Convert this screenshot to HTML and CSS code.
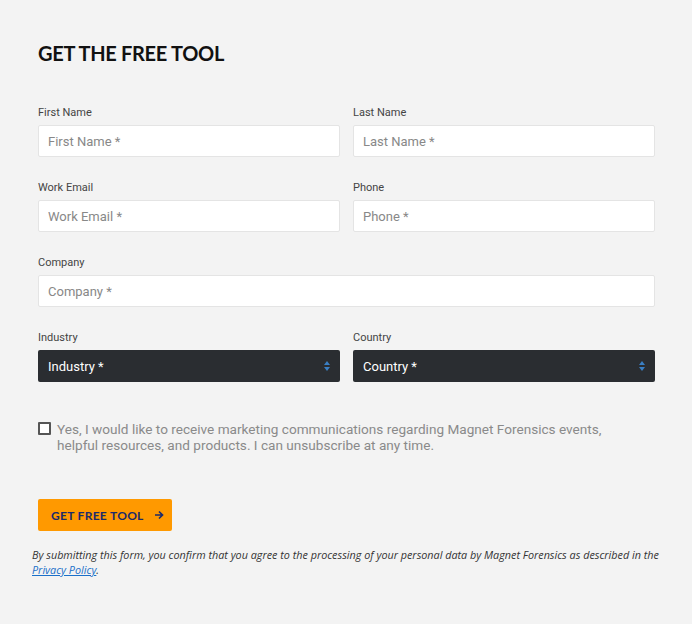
FILE: index.html
```html
<!DOCTYPE html>
<html>
<head>
<meta charset="utf-8">
<link rel="stylesheet" href="styles.css">
</head>
<body>
<div class="wrap">
  <h1 class="title">GET THE FREE TOOL</h1>
  <form class="form">
    <div class="grid">
      <div class="field">
        <label class="label">First Name</label>
        <input class="input" placeholder="First Name *">
      </div>
      <div class="field">
        <label class="label">Last Name</label>
        <input class="input" placeholder="Last Name *">
      </div>
      <div class="field">
        <label class="label">Work Email</label>
        <input class="input" placeholder="Work Email *">
      </div>
      <div class="field">
        <label class="label">Phone</label>
        <input class="input" placeholder="Phone *">
      </div>
      <div class="field full">
        <label class="label">Company</label>
        <input class="input" placeholder="Company *">
      </div>
      <div class="field">
        <label class="label">Industry</label>
        <div class="select"><span>Industry *</span>
          <svg class="arrows" width="8" height="12" viewBox="0 0 8 12"><path d="M4 1 L7 5 H1 Z M4 11 L7 7 H1 Z" fill="#3a7fc4"/></svg>
        </div>
      </div>
      <div class="field">
        <label class="label">Country</label>
        <div class="select"><span>Country *</span>
          <svg class="arrows" width="8" height="12" viewBox="0 0 8 12"><path d="M4 1 L7 5 H1 Z M4 11 L7 7 H1 Z" fill="#3a7fc4"/></svg>
        </div>
      </div>
    </div>
    <div class="consent">
      <span class="box"></span>
      <p class="consent-text">Yes, I would like to receive marketing communications regarding Magnet Forensics events, helpful resources, and products. I can unsubscribe at any time.</p>
    </div>
    <button type="button" class="btn">GET FREE TOOL
      <svg width="10" height="10" viewBox="0 0 10 10"><path d="M1 5 H8.5 M5 1.5 L8.5 5 L5 8.5" stroke="#1b2a6b" stroke-width="1.7" fill="none"/></svg>
    </button>
    <p class="disclaimer">By submitting this form, you confirm that you agree to the processing of your personal data by Magnet Forensics as described in the <a href="#">Privacy Policy</a>.</p>
  </form>
</div>
</body>
</html>
```
FILE: styles.css
```css
html, body {
  margin: 0;
  padding: 0;
  background: #f3f3f3;
}
body {
  font-family: Roboto, "Liberation Sans", sans-serif;
  color: #333;
}
.wrap {
  padding: 40px 37px 0 38px;
  width: 617px;
}
.title {
  margin: 0;
  font-family: Lato, "Liberation Sans", sans-serif;
  font-weight: 700;
  font-size: 20px;
  line-height: 26px;
  color: #111;
  letter-spacing: -0.3px;
}
.form {
  margin-top: 40px;
}
.grid {
  display: grid;
  grid-template-columns: 302px 302px;
  column-gap: 13px;
  row-gap: 24px;
}
.full {
  grid-column: 1 / 3;
}
.field {
  display: flex;
  flex-direction: column;
}
.label {
  font-size: 11px;
  line-height: 14px;
  color: #444;
  margin-bottom: 5px;
}
.input {
  box-sizing: border-box;
  height: 32px;
  border: 1px solid #e4e4e4;
  border-radius: 2px;
  background: #fff;
  padding: 0 9px;
  font-family: Roboto, "Liberation Sans", sans-serif;
  font-size: 13px;
  color: #333;
  outline: none;
}
.input::placeholder {
  color: #888;
}
.select {
  box-sizing: border-box;
  height: 32px;
  background: #2a2d31;
  border-radius: 2px;
  display: flex;
  align-items: center;
  justify-content: space-between;
  padding: 0 9px 0 10px;
  color: #fff;
  font-size: 13px;
}
.arrows {
  display: block;
}
.consent {
  display: flex;
  align-items: flex-start;
  margin-top: 39px;
}
.box {
  box-sizing: border-box;
  width: 13px;
  height: 13px;
  border: 2px solid #555;
  border-radius: 1px;
  background: #fff;
  margin-top: 1px;
  flex: none;
}
.consent-text {
  margin: 0 0 0 6px;
  font-size: 13.6px;
  line-height: 16px;
  color: #8a8a8a;
  width: 560px;
}
.btn {
  margin-top: 46px;
  display: flex;
  align-items: center;
  gap: 10px;
  height: 32px;
  padding: 0 8px 0 13px;
  border: none;
  border-radius: 2px;
  background: #ff9900;
  color: #1b2a6b;
  font-family: Lato, "Liberation Sans", sans-serif;
  font-weight: 700;
  font-size: 12px;
  letter-spacing: 0.3px;
}
.disclaimer {
  margin: 16px 0 0 -6px;
  width: 634px;
  font-family: "Open Sans", sans-serif;
  font-style: italic;
  font-size: 10.8px;
  line-height: 15px;
  color: #333;
}
.disclaimer a {
  color: #1a6fc9;
}
```
